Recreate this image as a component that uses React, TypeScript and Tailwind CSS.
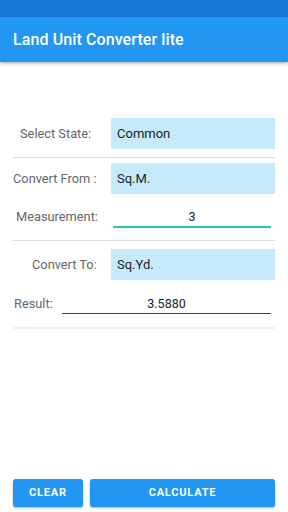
import React from "react";

export default function App() {
  const font = { fontFamily: "Roboto, 'Noto Sans', sans-serif" };
  return (
    <div className="w-[288px] h-[512px] flex flex-col bg-white overflow-hidden" style={font}>
      <div className="h-[17px] bg-[#1976D2] shrink-0" />
      <div className="h-[45px] bg-[#2196F3] shrink-0 flex items-center pl-[13px] shadow-[0_2px_3px_rgba(0,0,0,0.25)] relative z-10">
        <span className="text-white text-[16px] font-medium tracking-[0.1px]">Land Unit Converter lite</span>
      </div>
      <div className="flex flex-col px-[13px] pt-[56px]">
        <div className="flex items-center h-[31px]">
          <div className="w-[98px] pl-[7px] text-[12.8px] text-[#666]">Select State:</div>
          <div className="flex-1 h-[31px] bg-[#C4EAFB] flex items-center pl-[6px] text-[13px] text-[#222]">Common</div>
        </div>
        <div className="h-px bg-[#dcdcdc] mt-[8px]" />
        <div className="flex items-center h-[31px] mt-[5px]">
          <div className="w-[98px] text-[12.8px] text-[#666]">Convert From :</div>
          <div className="flex-1 h-[31px] bg-[#C4EAFB] flex items-center pl-[6px] text-[13px] text-[#222]">Sq.M.</div>
        </div>
        <div className="flex items-end h-[34px]">
          <div className="w-[100px] pl-[3px] pb-[2px] text-[12.8px] text-[#666]">Measurement:</div>
          <div className="w-[158px] flex flex-col">
            <div className="h-[20px] pt-[3px] flex items-center justify-center text-[12.5px] text-[#222]">3</div>
            <div className="h-[2px] bg-[#2AC5A5]" />
          </div>
        </div>
        <div className="h-px bg-[#dcdcdc] mt-[12px]" />
        <div className="flex items-center h-[31px] mt-[8px]">
          <div className="w-[98px] pl-[19px] text-[12.8px] text-[#666]">Convert To:</div>
          <div className="flex-1 h-[31px] bg-[#C4EAFB] flex items-center pl-[6px] text-[13px] text-[#222]">Sq.Yd.</div>
        </div>
        <div className="flex items-end h-[34px]">
          <div className="w-[49px] pl-px pb-[1px] text-[12.8px] text-[#666]">Result:</div>
          <div className="w-[209px] flex flex-col">
            <div className="h-[20px] pt-[3px] flex items-center justify-center text-[12.5px] text-[#222]">3.5880</div>
            <div className="h-px bg-[#444]" />
          </div>
        </div>
        <div className="h-[2px] bg-[#eeeeee] mt-[13px]" />
      </div>
      <div className="flex-1" />
      <div className="flex gap-[7px] px-[13px] pb-[5px]">
        <button className="w-[70px] h-[28px] bg-[#2196F3] rounded-[3px] text-white text-[11px] font-bold tracking-[0.8px] shadow-[0_1px_2px_rgba(0,0,0,0.3)]">CLEAR</button>
        <button className="flex-1 h-[28px] bg-[#2196F3] rounded-[3px] text-white text-[11px] font-bold tracking-[0.8px] shadow-[0_1px_2px_rgba(0,0,0,0.3)]">CALCULATE</button>
      </div>
    </div>
  );
}
